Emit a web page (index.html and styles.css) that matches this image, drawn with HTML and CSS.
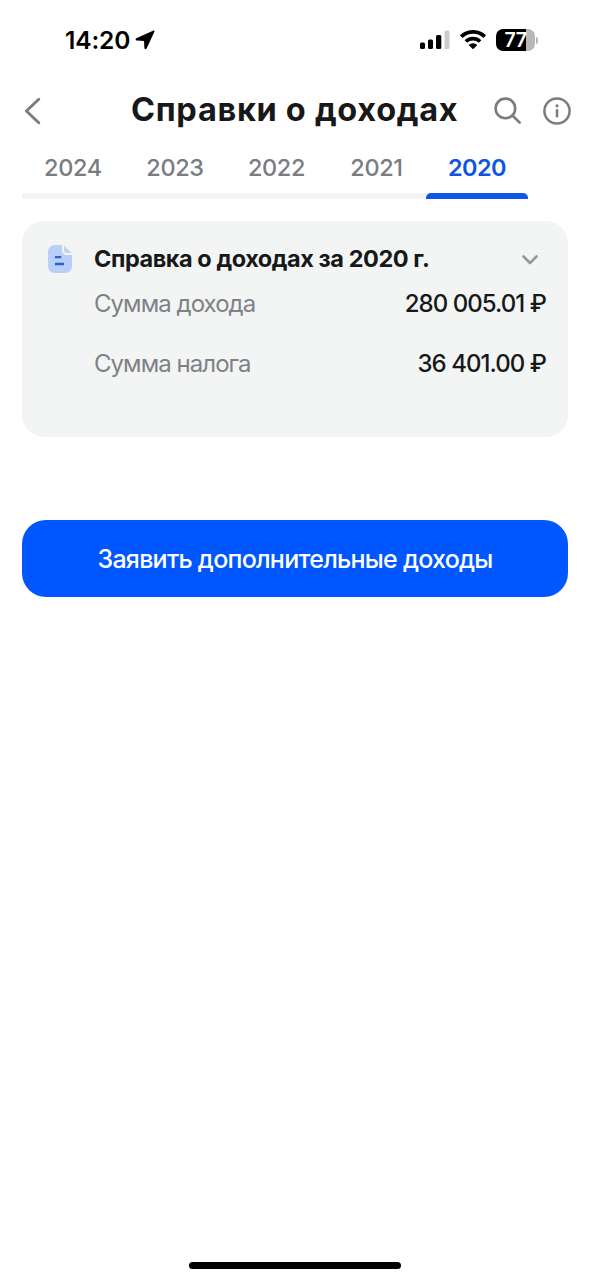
FILE: index.html
```html
<!DOCTYPE html>
<html lang="ru">
<head>
<meta charset="utf-8">
<meta name="viewport" content="width=device-width, initial-scale=1">
<title>Справки о доходах</title>
<link rel="stylesheet" href="styles.css">
</head>
<body>
<div class="screen">
  <div class="status">
    <div class="status-left">
      <span class="time">14:20</span>
      <svg class="location" width="20" height="20" viewBox="0 0 20 20"><path d="M18 .7 1.300 8.300C.1 8.900.5 10.500 1.800 10.500L9 10.900 9.400 18C9.500 19.300 11 19.600 11.600 18.400L19.300 2.100C19.800 1 19.100.2 18 .7Z"/></svg>
    </div>
    <div class="status-right">
      <svg width="30" height="20" viewBox="0 0 30 20"><rect x="0" y="12.500" width="5" height="6.500" rx="1.500"/><rect x="8" y="9.500" width="5" height="9.500" rx="1.500"/><rect x="16" y="5" width="5.300" height="14" rx="1.500"/><rect class="dim" x="24.500" y="0.500" width="5" height="18.500" rx="1.500"/></svg>
      <svg class="wifi" width="28" height="20" viewBox="0 0 28 20"><path class="arc" d="M2.200 6.600a17 17 0 0 1 23.600 0M6.900 11.500a10.300 10.300 0 0 1 14.200 0"/><path d="M9.600 15a6.400 6.400 0 0 1 8.800 0L14 19.300Z"/></svg>
      <div class="battery"><span class="level">77</span></div>
      <span class="battery-tip"></span>
    </div>
  </div>
  <header class="header">
    <svg class="back" width="18" height="28" viewBox="0 0 18 28"><path d="M14.800 2.200 2.400 14 14.800 25.800"/></svg>
    <h1 class="title">Справки о доходах</h1>
    <svg class="search" width="28" height="28" viewBox="0 0 28 28"><circle cx="11.400" cy="11.400" r="9.800"/><path d="m18.500 18.500 7.200 7.200"/></svg>
    <svg class="info" width="30" height="30" viewBox="0 0 30 30"><circle cx="15" cy="15" r="12.600"/><path d="M15 14.200v6"/><circle class="dot" cx="15" cy="9.800" r="1.600"/></svg>
  </header>
  <nav class="tabs">
    <a class="tab">2024</a>
    <a class="tab">2023</a>
    <a class="tab">2022</a>
    <a class="tab">2021</a>
    <a class="tab active">2020</a>
  </nav>
  <section class="card">
    <div class="card-head">
      <svg class="doc" width="24" height="28" viewBox="0 0 24 28"><path class="page" d="M6.500 0H14v5c0 3.300 1.700 5 5 5h5v11.500a6.500 6.500 0 0 1-6.500 6.500h-11A6.500 6.500 0 0 1 0 21.500v-15A6.500 6.500 0 0 1 6.500 0Z"/><path class="fold" d="M16 .8 23.500 8H19c-2 0-3-1-3-3Z"/><path class="lines" d="M7 12.200h6.200M7 19h9"/></svg>
      <h2 class="card-title">Справка о доходах за 2020 г.</h2>
      <svg class="chevron" width="18" height="12" viewBox="0 0 18 12"><path d="m2.500 2.500 6.500 6.500 6.500-6.500"/></svg>
    </div>
    <div class="row"><span class="label">Сумма дохода</span><span class="value">280 005.01 ₽</span></div>
    <div class="row"><span class="label">Сумма налога</span><span class="value">36 401.00 ₽</span></div>
  </section>
  <button class="primary">Заявить дополнительные доходы</button>
  <div class="home"></div>
</div>
</body>
</html>
```

FILE: styles.css
```css
* { box-sizing: border-box; }
body {
  margin: 0;
  background: #fff;
  color: #17181a;
  font-family: Inter, "Liberation Sans", sans-serif;
}
svg { display: block; flex: none; }
span, h1, h2, a { white-space: nowrap; }
.screen {
  height: 1280px;
  display: flex;
  flex-direction: column;
  overflow: hidden;
}
.status {
  height: 80px;
  padding: 0 52px 0 65px;
  display: flex;
  justify-content: space-between;
  align-items: center;
}
.status-left, .status-right { display: flex; align-items: center; }
.time { font-size: 24.5px; font-weight: 600; line-height: 30px; letter-spacing: -0.15px; color: #000; }
.location { margin-left: 5px; }
.dim { fill: #cbcbcb; }
.wifi { margin-left: 9px; }
.arc { fill: none; stroke: #000; stroke-width: 3.7; }
.battery {
  width: 39px;
  height: 22px;
  margin-left: 9px;
  border-radius: 7px;
  background: linear-gradient(to right, #000 30px, #b8b8b8 30px);
  display: flex;
  justify-content: center;
}
.level { font-size: 19.5px; line-height: 23px; font-weight: 600; letter-spacing: -0.5px; color: #fff; }
.battery-tip { width: 2px; height: 7px; margin-left: 1px; border-radius: 0 3px 3px 0; background: #b8b8b8; }
.header {
  height: 62px;
  padding: 0 18px 0 24px;
  display: flex;
  align-items: center;
}
.back, .search, .info { fill: none; stroke: #7b7c80; stroke-width: 2.9; stroke-linecap: round; stroke-linejoin: round; }
.title {
  margin: 0 0 3px 89px;
  width: 327px;
  font-size: 32.5px;
  line-height: 40px;
  font-weight: 700;
  letter-spacing: 0.7px;
}
.search { margin-left: 36px; stroke-width: 2.6; }
.info { margin-left: auto; stroke-width: 2.5; }
.dot { fill: #7b7c80; stroke: none; }
.tabs {
  width: 506px;
  height: 57px;
  margin-left: 22px;
  display: grid;
  grid-template-columns: 102px 102px 101px 99px 102px;
  background: linear-gradient(#f4f4f5, #f4f4f5) no-repeat 0 100% / 100% 6px;
  border-radius: 3px;
}
.tab {
  padding-top: 11px;
  text-align: center;
  font-size: 23.5px;
  line-height: 30px;
  font-weight: 500;
  letter-spacing: -0.35px;
  color: #7b7c82;
}
.tab.active { color: #0f55e0; font-weight: 600; letter-spacing: -0.6px; display: flex; flex-direction: column; justify-content: space-between; }
.tab.active::after { content: ""; height: 6px; border-radius: 5px 5px 0 0; background: #0f55e8; }
.card {
  height: 216px;
  margin: 22px 22px 0;
  padding: 23px 22px 0 26px;
  border-radius: 22px;
  background: #f3f5f5;
}
.card-head { height: 30px; display: flex; align-items: center; }
.page { fill: #b9cffa; }
.fold { fill: #c6d0e8; }
.lines { fill: none; stroke: #2861d0; stroke-width: 2.3; }
.card-title { margin: 0 0 0 22px; font-size: 23.5px; line-height: 30px; font-weight: 700; letter-spacing: -0.45px; }
.chevron { margin: 2px 7px 0 auto; fill: none; stroke: #96989b; stroke-width: 2.6; stroke-linecap: round; stroke-linejoin: round; }
.row {
  height: 30px;
  margin: 15px 0 0 46px;
  display: flex;
  justify-content: space-between;
  font-size: 24px;
  line-height: 30px;
  letter-spacing: -0.95px;
}
.row + .row { margin-top: 30px; }
.label { color: #7f8186; }
.value { font-weight: 500; }
.primary {
  height: 77px;
  margin: 83px 22px 0;
  padding: 0;
  border: 0;
  border-radius: 24px;
  background: #0057ff;
  color: #fff;
  font: 500 25px/32px Inter, "Liberation Sans", sans-serif;
  letter-spacing: -0.75px;
}
.home {
  width: 212px;
  height: 7px;
  margin: auto auto 11px;
  border-radius: 4px;
  background: #000;
}
```
